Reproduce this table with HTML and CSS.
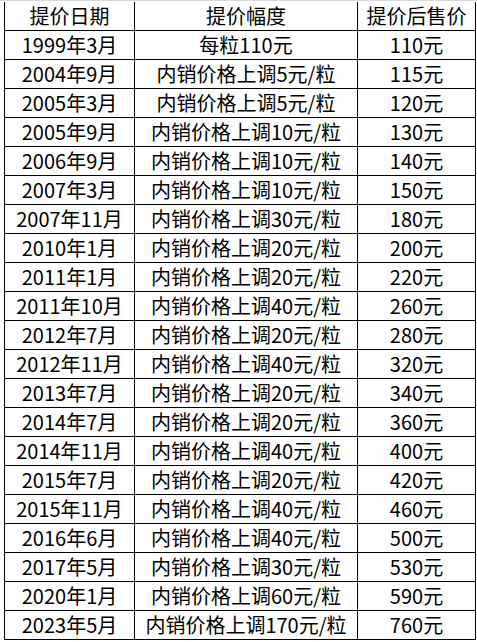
FILE: index.html
```html
<!DOCTYPE html>
<html lang="zh-CN">
<head>
<meta charset="utf-8">
<title>提价表</title>
<link rel="stylesheet" href="styles.css">
</head>
<body>
<div class="sheet">
<table class="price-table">
<colgroup><col class="c1"><col class="c2"><col class="c3"></colgroup>
<thead>
<tr><th>提价日期</th><th>提价幅度</th><th>提价后售价</th></tr>
</thead>
<tbody>
<tr><td>1999年3月</td><td>每粒110元</td><td>110元</td></tr>
<tr><td>2004年9月</td><td>内销价格上调5元/粒</td><td>115元</td></tr>
<tr><td>2005年3月</td><td>内销价格上调5元/粒</td><td>120元</td></tr>
<tr><td>2005年9月</td><td>内销价格上调10元/粒</td><td>130元</td></tr>
<tr><td>2006年9月</td><td>内销价格上调10元/粒</td><td>140元</td></tr>
<tr><td>2007年3月</td><td>内销价格上调10元/粒</td><td>150元</td></tr>
<tr><td>2007年11月</td><td>内销价格上调30元/粒</td><td>180元</td></tr>
<tr><td>2010年1月</td><td>内销价格上调20元/粒</td><td>200元</td></tr>
<tr><td>2011年1月</td><td>内销价格上调20元/粒</td><td>220元</td></tr>
<tr><td>2011年10月</td><td>内销价格上调40元/粒</td><td>260元</td></tr>
<tr><td>2012年7月</td><td>内销价格上调20元/粒</td><td>280元</td></tr>
<tr><td>2012年11月</td><td>内销价格上调40元/粒</td><td>320元</td></tr>
<tr><td>2013年7月</td><td>内销价格上调20元/粒</td><td>340元</td></tr>
<tr><td>2014年7月</td><td>内销价格上调20元/粒</td><td>360元</td></tr>
<tr><td>2014年11月</td><td>内销价格上调40元/粒</td><td>400元</td></tr>
<tr><td>2015年7月</td><td>内销价格上调20元/粒</td><td>420元</td></tr>
<tr><td>2015年11月</td><td>内销价格上调40元/粒</td><td>460元</td></tr>
<tr><td>2016年6月</td><td>内销价格上调40元/粒</td><td>500元</td></tr>
<tr><td>2017年5月</td><td>内销价格上调30元/粒</td><td>530元</td></tr>
<tr><td>2020年1月</td><td>内销价格上调60元/粒</td><td>590元</td></tr>
<tr><td>2023年5月</td><td>内销价格上调170元/粒</td><td>760元</td></tr>
</tbody>
</table>
</div>
</body>
</html>
```
FILE: styles.css
```css
html, body {
  margin: 0;
  padding: 0;
  background: #fff;
}
.sheet {
  width: 477px;
  height: 642px;
  box-sizing: border-box;
  border-top: 1px solid #d9d9d9;
  padding: 1px 0 0 4px;
}
.price-table {
  border-collapse: collapse;
  table-layout: fixed;
  width: 471px;
  font-family: "Noto Sans CJK SC", "Noto Sans", sans-serif;
  font-size: 20px;
  color: #000;
}
.c1 { width: 130px; }
.c2 { width: 223px; }
.c3 { width: 118px; }
.price-table th,
.price-table td {
  border: 1px solid #000;
  height: 28px;
  padding: 0;
  line-height: 28px;
  text-align: center;
  font-weight: normal;
  white-space: nowrap;
  box-sizing: border-box;
}
.price-table thead th {
  border-top: none;
}
```
